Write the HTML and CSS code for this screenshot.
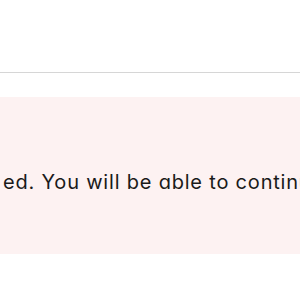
FILE: index.html
```html
<!DOCTYPE html>
<html>
<head>
<meta charset="utf-8">
<link rel="stylesheet" href="styles.css">
</head>
<body>
<header class="topbar"></header>
<main class="content">
  <section class="notice">
    <p class="notice-text">ed. You will be able to continue once the review is complete.</p>
  </section>
</main>
</body>
</html>
```
FILE: styles.css
```css
html, body {
  margin: 0;
  padding: 0;
  background: #ffffff;
}
body {
  font-family: Inter, "Noto Sans", sans-serif;
  font-feature-settings: "cv11" 1;
  overflow: hidden;
}
.topbar {
  height: 72px;
  border-bottom: 1px solid #d6d6d6;
  background: #fff;
}
.content {
  padding-top: 24px;
}
.notice {
  height: 157px;
  background: #fdf2f2;
  display: flex;
  align-items: center;
  overflow: hidden;
}
.notice-text {
  margin: 0;
  padding: 12px 0 0 3px;
  white-space: nowrap;
  font-size: 20px;
  letter-spacing: 0.8px;
  color: #1a1a1a;
}
```
